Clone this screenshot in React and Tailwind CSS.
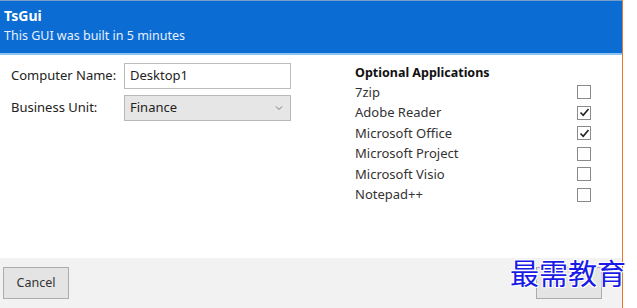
import React from 'react';

const apps = [
  { name: '7zip', checked: false },
  { name: 'Adobe Reader', checked: true },
  { name: 'Microsoft Office', checked: true },
  { name: 'Microsoft Project', checked: false },
  { name: 'Microsoft Visio', checked: false },
  { name: 'Notepad++', checked: false },
];

const Check = ({ checked }) => (
  <div className="w-[14px] h-[14px] border border-[#8a8a8a] bg-white flex items-center justify-center">
    {checked && (
      <svg width="11" height="11" viewBox="0 0 11 11" fill="none">
        <path d="M1.5 5.5 L4.2 8.3 L9.5 2" stroke="#222" strokeWidth="1.6" />
      </svg>
    )}
  </div>
);

const App = () => {
  return (
    <div className="w-[637px] h-[308px] bg-white flex overflow-hidden" style={{ fontFamily: '"Noto Sans", "Open Sans", sans-serif' }}>
      <div className="w-[623px] h-full flex flex-col border-r border-[#e8742f]">
        <div className="h-[55px] bg-[#0b6cd3] border-t border-[#7a9cc8] border-b-2 border-b-[#8cc4ef] pl-[4px] pt-[6px]">
          <div className="text-white font-bold text-[14px] leading-[18px]">TsGui</div>
          <div className="text-[#e6f0ff] text-[12.5px] leading-[18px] mt-[2px]">This GUI was built in 5 minutes</div>
        </div>

        <div className="flex-1 flex pt-[8px]">
          <div className="w-[345px] flex flex-col gap-[6px] pl-[11px]">
            <div className="flex items-center">
              <span className="w-[113px] text-[13px] text-[#222]">Computer Name:</span>
              <div className="w-[167px] h-[26px] border border-[#bcbcbc] bg-white flex items-center px-[5px] text-[13px] text-[#222]">Desktop1</div>
            </div>
            <div className="flex items-center">
              <span className="w-[113px] text-[13px] text-[#222]">Business Unit:</span>
              <div className="w-[167px] h-[26px] border border-[#b8b8b8] bg-[#e6e6e6] flex items-center justify-between px-[5px] text-[13px] text-[#222]">
                <span>Finance</span>
                <svg width="8" height="6" viewBox="0 0 8 6" className="mr-[2px]">
                  <path d="M1 1.5 L4 4.5 L7 1.5" stroke="#777" strokeWidth="1" fill="none" />
                </svg>
              </div>
            </div>
          </div>

          <div className="flex-1 pl-[10px] pr-[31px]">
            <div className="text-[12.5px] font-bold text-[#111] leading-[18px] mt-[1px]">Optional Applications</div>
            {apps.map((a) => (
              <div key={a.name} className="flex items-center justify-between h-[20.5px] text-[13px] text-[#333]">
                <span>{a.name}</span>
                <Check checked={a.checked} />
              </div>
            ))}
          </div>
        </div>

        <div className="h-[50px] bg-[#f2f2f2] flex items-center justify-between px-[3px] relative">
          <button className="w-[66px] h-[32px] border border-[#acacac] bg-[#e4e4e4] text-[12.5px] text-[#333]">Cancel</button>
          <button className="w-[66px] h-[32px] border border-[#acacac] bg-[#e4e4e4] mr-[17px]" aria-label="Next"></button>
          <div
            className="absolute right-[-4px] top-[-6px] text-[29px] leading-[40px] text-[#1a1ae6]"
            style={{ fontFamily: '"Noto Sans CJK SC", serif', textShadow: '1px 1px 0 #fff, -1px -1px 0 #fff, 1px -1px 0 #fff, -1px 1px 0 #fff' }}
          >
            最需教育
          </div>
        </div>
      </div>
    </div>
  );
};

export default App;
